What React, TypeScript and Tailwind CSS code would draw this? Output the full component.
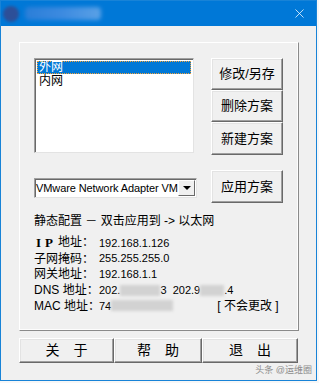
import { X } from "lucide-react";

const font = "font-['Liberation_Sans','Noto_Sans_CJK_SC',sans-serif]";

function WinButton({ label, className = "" }: { label: string; className?: string }) {
  return (
    <div
      className={`flex items-center justify-center bg-[#f0f0f0] border border-t-white border-l-white border-r-[#696969] border-b-[#696969] shadow-[inset_-1px_-1px_0_#a0a0a0,inset_1px_1px_0_#e3e3e3] text-[13px] text-black ${className}`}
    >
      {label}
    </div>
  );
}

function Blur({ w }: { w: number }) {
  return (
    <span
      className="inline-block h-[11px] bg-[#d2d2d2] blur-[1.5px] align-middle"
      style={{ width: w }}
    />
  );
}

export default function App() {
  const rows: { label: React.ReactNode; value: React.ReactNode }[] = [
    {
      label: (
        <span className="flex">
          <span className="font-['Liberation_Serif'] font-bold text-[13px] w-[11px] pl-[2px]">I</span>
          <span className="font-['Liberation_Serif'] font-bold text-[13px] w-[13px]">P</span>
          <span>地址：</span>
        </span>
      ),
      value: "192.168.1.126",
    },
    { label: "子网掩码：", value: "255.255.255.0" },
    { label: "网关地址：", value: "192.168.1.1" },
    {
      label: "DNS 地址：",
      value: (
        <span className="flex items-center">
          202.<Blur w={40} />3&nbsp;&nbsp;202.9<Blur w={24} />.4
        </span>
      ),
    },
    {
      label: "MAC 地址：",
      value: (
        <span className="flex items-center w-[180px]">
          74<Blur w={62} />
          <span className="ml-[44px] text-[12px]">[ 不会更改 ]</span>
        </span>
      ),
    },
  ];

  return (
    <div className={`w-[319px] h-[383px] bg-[#f7f7f7] ${font}`}>
      <div className="relative w-[317px] h-[381px] border border-[#1883d7] bg-[#f0f0f0] flex flex-col">
        {/* title bar */}
        <div className="h-[25px] bg-[#0078d7] flex items-center shrink-0">
          <div className="ml-[2px] w-[16px] h-[16px] rounded-full bg-[#2d4f98] blur-[1.5px]" />
          <div className="ml-[6px] w-[76px] h-[13px] rounded bg-gradient-to-r from-[#2a7ed8] via-[#3d8be0] to-[#5aa1e6] blur-[2px]" />
          <X className="ml-auto mr-[9px] text-white" size={15} strokeWidth={1.2} />
        </div>

        {/* group box */}
        <div className="ml-[18px] mt-[16px] w-[280px] h-[289px] border border-t-white border-l-white border-r-[#8a8a8a] border-b-[#8a8a8a] shadow-[inset_-1px_-1px_0_#fdfdfd] pl-[14px] pt-[15px] text-[12px] text-black">
          <div className="flex">
            <div className="w-[160px] h-[95px] bg-white border border-t-[#a0a0a0] border-l-[#a0a0a0] border-r-[#e3e3e3] border-b-[#e3e3e3] shadow-[inset_1px_1px_0_#696969] p-[2px] leading-[13px]">
              <div className="h-[13px] bg-[#0078d7] text-white border border-dotted border-[#f2a33a] flex items-center pl-[1px]">
                外网
              </div>
              <div className="h-[14px] flex items-center pl-[2px]">内网</div>
            </div>
            <div className="ml-[17px] flex flex-col">
              <WinButton label="修改/另存" className="w-[72px] h-[32px]" />
              <WinButton label="删除方案" className="w-[72px] h-[32px]" />
              <WinButton label="新建方案" className="w-[72px] h-[33px]" />
            </div>
          </div>

          <div className="flex items-center mt-[15px]">
            <div className="w-[163px] h-[20px] bg-white border border-t-[#a0a0a0] border-l-[#a0a0a0] border-r-[#e3e3e3] border-b-[#e3e3e3] shadow-[inset_1px_1px_0_#696969] flex items-center mt-[3px]">
              <div className="flex-1 overflow-hidden whitespace-nowrap pl-[1px] text-[11px] leading-[16px] tracking-[-0.1px]">
                VMware Network Adapter VM
              </div>
              <div className="w-[17px] h-[16px] mr-[1px] bg-[#f0f0f0] border border-t-white border-l-white border-r-[#696969] border-b-[#696969] flex items-center justify-center">
                <div className="w-0 h-0 border-l-[4px] border-r-[4px] border-t-[4px] border-l-transparent border-r-transparent border-t-black" />
              </div>
            </div>
            <WinButton label="应用方案" className="ml-[14px] w-[72px] h-[33px]" />
          </div>

          <div className="mt-[10px] leading-[16px] whitespace-nowrap">静态配置 － 双击应用到 -&gt; 以太网</div>

          <div className="mt-[6px] flex flex-col">
            {rows.map((r, i) => (
              <div key={i} className="flex items-center h-[15.75px] whitespace-nowrap">
                <div className="w-[65px] flex">{r.label}</div>
                <div className="text-[11px]">{r.value}</div>
              </div>
            ))}
          </div>
        </div>

        {/* bottom buttons */}
        <div className="ml-[18px] mt-[7px] flex text-[13px]">
          <WinButton label="关　于" className="w-[95px] h-[25px] text-[14px]" />
          <WinButton label="帮　助" className="w-[88px] h-[25px] text-[14px]" />
          <WinButton label="退　出" className="w-[96px] h-[25px] text-[14px]" />
        </div>

        <div className="absolute right-[4px] bottom-[3px] text-[9px] text-[#8c8c8c]">头条 @运维圈</div>
      </div>
    </div>
  );
}
